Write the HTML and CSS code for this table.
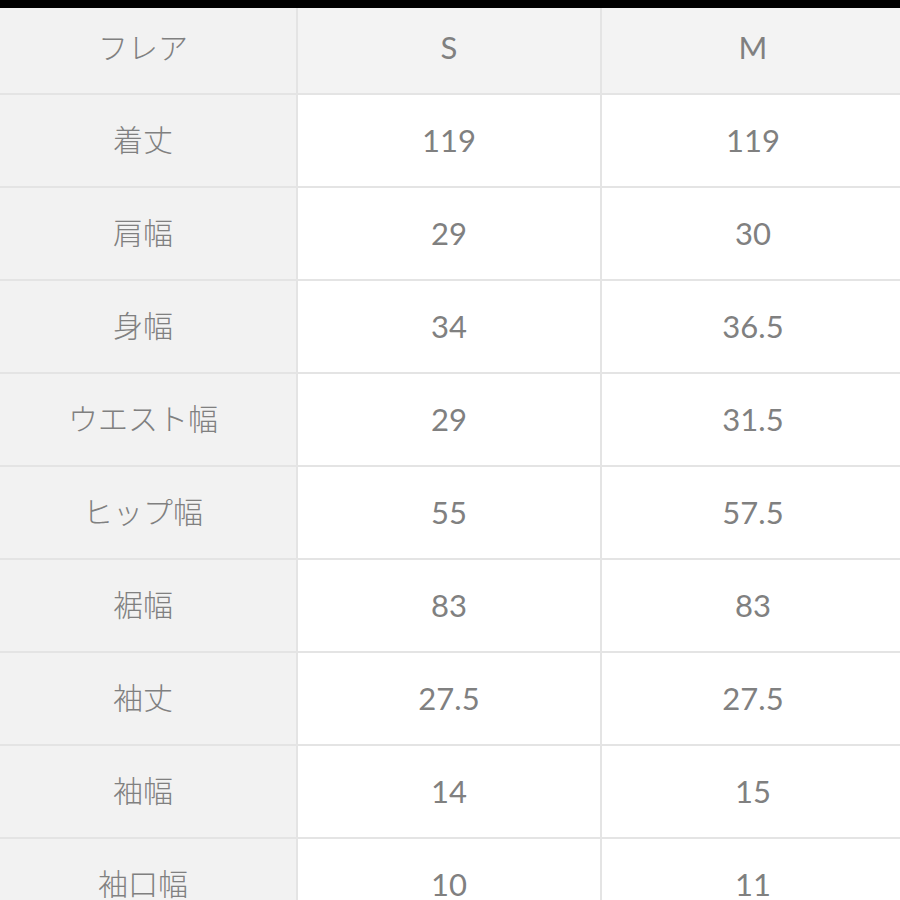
FILE: index.html
```html
<!DOCTYPE html>
<html lang="ja">
<head>
<meta charset="utf-8">
<link rel="stylesheet" href="styles.css">
</head>
<body>
<div class="topbar"></div>
<div class="table">
  <div class="cell head label">フレア</div>
  <div class="cell head">S</div>
  <div class="cell head">M</div>

  <div class="cell label">着丈</div><div class="cell">119</div><div class="cell">119</div>
  <div class="cell label">肩幅</div><div class="cell">29</div><div class="cell">30</div>
  <div class="cell label">身幅</div><div class="cell">34</div><div class="cell">36.5</div>
  <div class="cell label">ウエスト幅</div><div class="cell">29</div><div class="cell">31.5</div>
  <div class="cell label">ヒップ幅</div><div class="cell">55</div><div class="cell">57.5</div>
  <div class="cell label">裾幅</div><div class="cell">83</div><div class="cell">83</div>
  <div class="cell label">袖丈</div><div class="cell">27.5</div><div class="cell">27.5</div>
  <div class="cell label">袖幅</div><div class="cell">14</div><div class="cell">15</div>
  <div class="cell label">袖口幅</div><div class="cell">10</div><div class="cell">11</div>
</div>
</body>
</html>
```

FILE: styles.css
```css
html, body {
  margin: 0;
  padding: 0;
  background: #ffffff;
  overflow: hidden;
}
body {
  width: 900px;
  height: 900px;
  font-family: "Lato", "Noto Sans CJK JP", sans-serif;
  color: #808080;
}
.topbar {
  height: 8px;
  background: #000000;
}
.table {
  display: grid;
  grid-template-columns: 296px 302px 302px;
  grid-template-rows: 85px repeat(9, 91px);
  gap: 2px;
  background: #e4e4e4;
  width: 904px;
}
.cell {
  background: #ffffff;
  display: flex;
  align-items: center;
  justify-content: center;
  font-size: 31px;
  line-height: 1;
}
.head {
  background: #f3f3f3;
  padding-bottom: 6px;
}
.label {
  background: #f2f2f2;
  padding-right: 10px;
  padding-bottom: 5px;
  font-family: "Noto Sans CJK JP", sans-serif;
  font-weight: 300;
  font-size: 30px;
}
.head.label {
  padding-bottom: 10px;
}
```
